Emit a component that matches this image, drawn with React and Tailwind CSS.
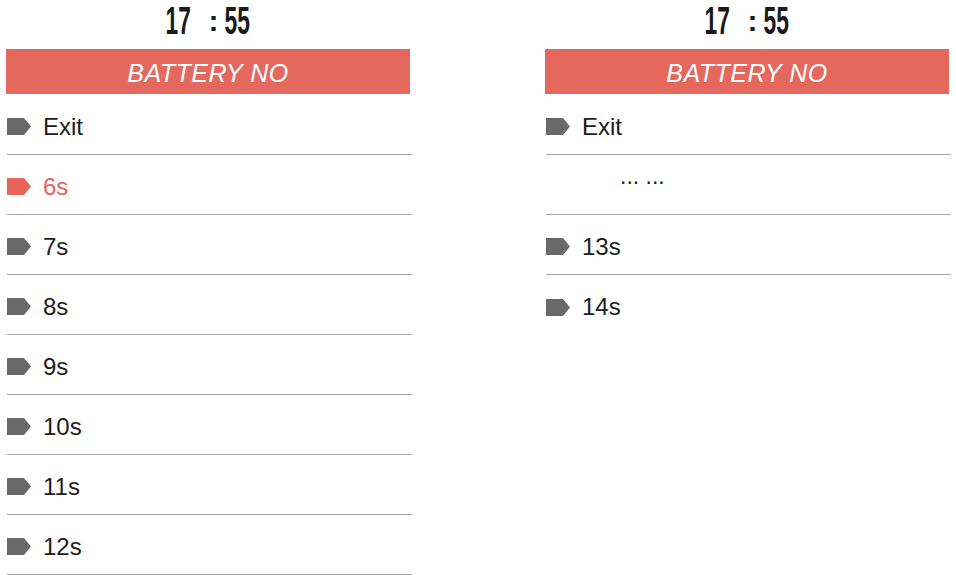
import React from "react";

const Tag = ({ color }) => (
  <svg width="24" height="17" viewBox="0 0 24 17" className="shrink-0">
    <path d="M0 0 H17 L24 8.5 L17 17 H0 Z" fill={color} />
  </svg>
);

const Row = ({ label, active, dots, last }) => {
  const border = last ? "" : " border-b border-[#a6a6a6]";
  if (dots) {
    return (
      <div className={"h-[60px] flex items-center pb-[16px] pl-[74px]" + border}>
        <span className="text-[23px] text-[#1f1f1f] leading-none">... ...</span>
      </div>
    );
  }
  return (
    <div className={"h-[60px] flex items-center pt-[4px] gap-[12px]" + border}>
      <Tag color={active ? "#e9645a" : "#696969"} />
      <span
        className={
          "text-[24px] leading-none " + (active ? "text-[#e9645a]" : "text-[#1c1c1c]")
        }
      >
        {label}
      </span>
    </div>
  );
};

const Header = () => (
  <>
    <div className="h-[49px] w-[404px] flex items-center justify-center pb-[8px] text-[#1a1a1a]">
      <div className="w-[25px] flex justify-center">
        <span className="inline-block scale-x-[0.6] text-[38px] font-bold leading-none">17</span>
      </div>
      <div className="ml-[20px] w-[6px] flex justify-center">
        <span className="inline-block text-[30px] font-bold leading-none">:</span>
      </div>
      <div className="ml-[8px] w-[26px] flex justify-center">
        <span className="inline-block scale-x-[0.6] text-[38px] font-bold leading-none">55</span>
      </div>
    </div>
    <div className="h-[45px] w-[404px] bg-[#e5685e] flex items-center justify-center pt-[3px]">
      <span className="text-white italic text-[25px] leading-none tracking-[0.5px]">BATTERY NO</span>
    </div>
  </>
);

export default function App() {
  const left = ["6s", "7s", "8s", "9s", "10s", "11s", "12s"];
  return (
    <div
      className="w-[956px] h-[575px] bg-white overflow-hidden flex pl-[6px] gap-[133px]"
      style={{ fontFamily: '"Liberation Sans", Arial, sans-serif' }}
    >
      <div className="w-[406px] flex flex-col">
        <Header />
        <div className="mt-[1px] ml-[1px] w-[405px] flex flex-col">
          <Row label="Exit" />
          {left.map((l, i) => (
            <Row key={l} label={l} active={i === 0} />
          ))}
        </div>
      </div>
      <div className="w-[406px] flex flex-col">
        <Header />
        <div className="mt-[1px] ml-[1px] w-[405px] flex flex-col">
          <Row label="Exit" />
          <Row dots />
          <Row label="13s" />
          <Row label="14s" last />
        </div>
      </div>
    </div>
  );
}
